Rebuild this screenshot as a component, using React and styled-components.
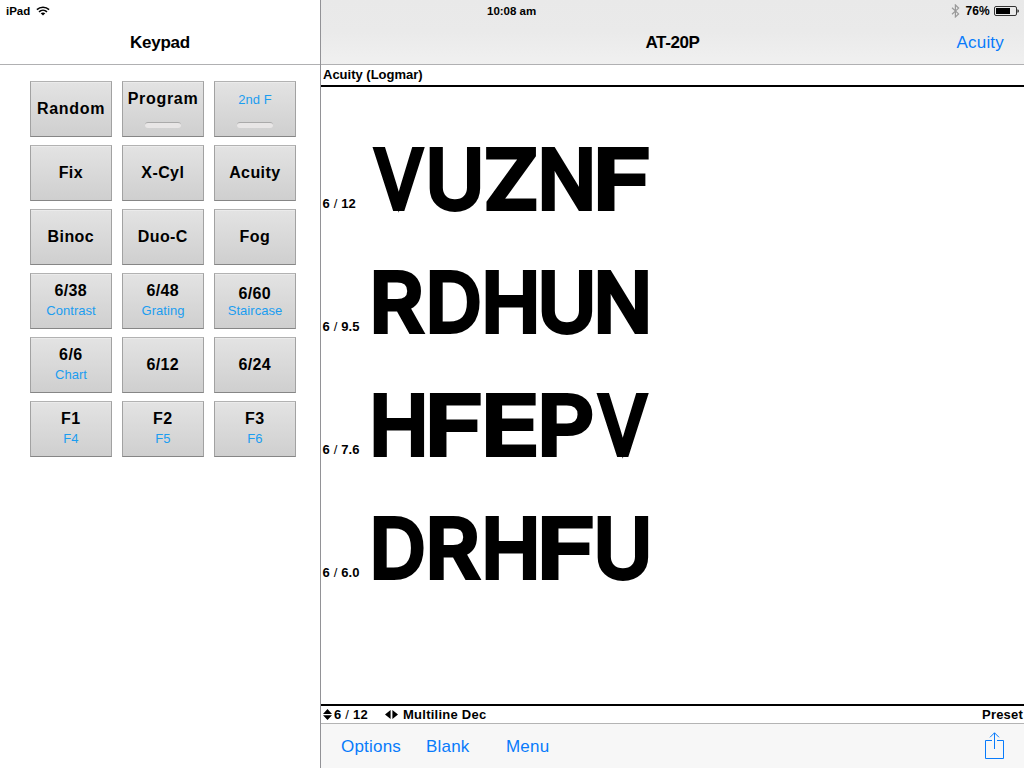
import React from 'react';
import styled, { createGlobalStyle } from 'styled-components';

const GlobalStyle = createGlobalStyle`
  * { box-sizing: border-box; }
  html, body { margin: 0; padding: 0; background: #fff; }
  body { font-family: "Liberation Sans", Arial, sans-serif; color: #000; overflow: hidden; }
`;

const Screen = styled.div`
  display: grid;
  grid-template-columns: 321px 703px;
  width: 1024px;
  height: 768px;
  overflow: hidden;
`;

const Sidebar = styled.aside`
  display: flex;
  flex-direction: column;
  border-right: 1px solid #929296;
  background: #fff;
`;

const Main = styled.main`
  display: flex;
  flex-direction: column;
  min-width: 0;
`;

const Header = styled.header`
  display: grid;
  grid-template-rows: 22px 42px;
  flex: none;
  height: 65px;
  border-bottom: 1px solid #b0b0b2;
  background: ${(p) => (p.$shaded ? 'linear-gradient(#e9e9e9 0%, #eaeaea 50%, #f0f0f0 100%)' : '#fff')};
`;

const StatusRow = styled.div`
  display: flex;
  align-items: center;
  padding: 0 5px 0 6px;
  font-size: 11.5px;
  font-weight: 700;
  line-height: 22px;
  white-space: nowrap;
`;

const Clock = styled.span`
  margin-left: 160px;
`;

const Power = styled.div`
  display: flex;
  align-items: center;
  margin-left: auto;
  font-size: 12px;
`;

const PowerLevel = styled.span`
  margin: 0 4px 0 5px;
  letter-spacing: 0.2px;
`;

const TitleRow = styled.div`
  display: grid;
  grid-template-columns: 1fr auto 1fr;
  align-items: center;
  padding: 0 20px 1px;
`;

const Title = styled.h1`
  grid-column: 2;
  margin: 0;
  font-size: 17px;
  font-weight: 700;
  line-height: 20px;
  letter-spacing: ${(p) => p.$spacing || '-0.25px'};
`;

const BarButton = styled.button`
  padding: 0;
  border: 0;
  background: none;
  color: #087bfb;
  font: 17px/20px "Liberation Sans", Arial, sans-serif;
  letter-spacing: 0.2px;
  justify-self: end;
`;

const Keys = styled.div`
  display: grid;
  grid-template-columns: repeat(3, 82px);
  grid-auto-rows: 56px;
  gap: 8px 10px;
  padding: 16px 0 0 30px;
`;

const KeyButton = styled.button`
  display: flex;
  flex-direction: column;
  align-items: center;
  justify-content: flex-start;
  padding: ${(p) => p.$top}px 0 0;
  border: 1px solid #a2a2a2;
  border-top-color: #b2b2b2;
  border-bottom-color: #868686;
  background: linear-gradient(#e3e3e3, #cfcfcf);
  box-shadow: inset 0 1px 0 #ebebeb;
  font-family: "Liberation Sans", Arial, sans-serif;
  white-space: nowrap;
`;

const KeyLabel = styled.span`
  color: #000;
  font-size: 16px;
  font-weight: 700;
  line-height: 18px;
  letter-spacing: ${(p) => (p.$wide ? 0.7 : 0.4)}px;
  margin-right: ${(p) => (p.$wide ? 0 : 0.4)}px;
`;

const KeyAlt = styled.span`
  color: #1b9df0;
  font-size: 13px;
  line-height: 16px;
  letter-spacing: 0.05px;
  margin-top: ${(p) => p.$gap || 0}px;
`;

const Lamp = styled.span`
  width: 36px;
  height: 6px;
  margin-top: ${(p) => p.$gap}px;
  border-radius: 3px;
  background: #e8e6e6;
  border-top: 1px solid #aaa;
`;

const Display = styled.section`
  display: flex;
  flex-direction: column;
  flex: 1;
  min-height: 0;
`;

const lcdType = `
  font-size: 13px;
  font-weight: 700;
  white-space: nowrap;
`;

const ChartName = styled.div`
  ${lcdType}
  height: 22px;
  padding-left: 2px;
  border-bottom: 2px solid #000;
  line-height: 20px;
`;

const Lines = styled.div`
  display: flex;
  flex-direction: column;
  flex: 1;
  gap: 59px;
  padding-top: 60px;
`;

const Line = styled.div`
  display: flex;
  align-items: flex-end;
  height: 64px;
`;

const LineSize = styled.span`
  ${lcdType}
  width: 52px;
  padding-left: 1.5px;
  line-height: 15px;
  letter-spacing: 0.15px;
`;

const Slash = styled.span`
  font-weight: 400;
`;

const Letters = styled.div`
  display: grid;
  grid-template-columns: repeat(5, 52px);
  column-gap: 4px;
  height: 64px;
`;

const FONT_SIZE = 79.8;
const STROKE = 6;
const PRECISION = 10;

const Glyph = styled.span`
  display: block;
  width: 52px;
  height: 64px;
  font-family: Inter, "Liberation Sans", sans-serif;
  font-size: ${FONT_SIZE}px;
  font-weight: 400;
  line-height: 64px;
  white-space: nowrap;
  -webkit-text-stroke: ${STROKE}px #000;
  transform-origin: 0 0;
  transform: scaleX(${(p) => p.$scale}) translateX(${(p) => p.$shift}px);
`;

const Footer = styled.div`
  ${lcdType}
  display: flex;
  align-items: center;
  height: 19px;
  padding: 0 1px 0 2px;
  border-top: 2px solid #000;
  line-height: 17px;
  letter-spacing: 0.25px;
`;

const Step = styled.span`
  display: flex;
  align-items: center;
  gap: ${(p) => p.$gap}px;
  width: ${(p) => p.$width}px;
`;

const Preset = styled.span`
  margin-left: auto;
  letter-spacing: 0.2px;
`;

const Toolbar = styled.nav`
  display: flex;
  align-items: center;
  flex: none;
  height: 45px;
  padding: 0 19px 0 20px;
  border-top: 1px solid #b4b4b4;
  background: #f7f7f7;
`;

const ToolSlot = styled.div`
  width: ${(p) => p.$width}px;
  padding-top: 2px;
  line-height: 20px;
`;

const ShareButton = styled.button`
  display: flex;
  margin-left: auto;
  padding: 0;
  border: 0;
  background: none;
  color: #087bfb;
`;

const pen = document.createElement('canvas').getContext('2d');
pen.font = `${FONT_SIZE * PRECISION}px Inter, "Liberation Sans"`;

// Every optotype fills the same box, whatever its natural width.
function fitLetter(letter) {
  const box = pen.measureText(letter);
  const left = -box.actualBoundingBoxLeft / PRECISION;
  const width = box.actualBoundingBoxRight / PRECISION - left + STROKE;
  const target = 'FEZP'.includes(letter) ? 52 : 51.2;
  return { scale: target / width, shift: STROKE / 2 - left };
}

function Optotype({ letter }) {
  const { scale, shift } = fitLetter(letter);
  return <Glyph $scale={scale} $shift={shift}>{letter}</Glyph>;
}

function Size({ value }) {
  return <>6 <Slash>/</Slash> {value}</>;
}

const WifiIcon = styled.svg`
  margin-left: 6px;
`;

function Wifi() {
  return (
    <WifiIcon width="14" height="10" viewBox="0 0 14 10" fill="none" stroke="#000" strokeWidth="1.5">
      <path d="M0.9 3.6C4.3 0.3 9.7 0.3 13.1 3.6" />
      <path d="M3 5.9C5.3 3.7 8.7 3.7 11 5.9" />
      <path d="M4.7 7.3C6 6.2 8 6.2 9.3 7.3L7 9.6Z" fill="#000" stroke="none" />
    </WifiIcon>
  );
}

function Bluetooth() {
  return (
    <svg width="9" height="14" viewBox="0 0 9 14" fill="none" stroke="#999" strokeWidth="1.2">
      <path d="M1 3.8L7.6 9.9L4.4 12.9V1L7.6 4.1L1 10.2" />
    </svg>
  );
}

function Battery() {
  return (
    <svg width="25" height="10" viewBox="0 0 25 10">
      <rect x="0.5" y="0.5" width="22" height="9" rx="1.5" fill="none" stroke="#333" />
      <rect x="2" y="2" width="14" height="6" fill="#000" />
      <path d="M23.5 3.2C25.2 3.5 25.2 6.5 23.5 6.8Z" fill="#000" />
    </svg>
  );
}

const keys = [
  { label: 'Random', top: 18, wide: true },
  { label: 'Program', top: 8, lamp: 14, wide: true },
  { alt: '2nd F', top: 10, lamp: 14 },
  { label: 'Fix', top: 18 },
  { label: 'X-Cyl', top: 18 },
  { label: 'Acuity', top: 18 },
  { label: 'Binoc', top: 18 },
  { label: 'Duo-C', top: 18 },
  { label: 'Fog', top: 18 },
  { label: '6/38', alt: 'Contrast', top: 8, gap: 3 },
  { label: '6/48', alt: 'Grating', top: 8, gap: 3 },
  { label: '6/60', alt: 'Staircase', top: 11, gap: 0 },
  { label: '6/6', alt: 'Chart', top: 8, gap: 3 },
  { label: '6/12', top: 18 },
  { label: '6/24', top: 18 },
  { label: 'F1', alt: 'F4', top: 8, gap: 3 },
  { label: 'F2', alt: 'F5', top: 8, gap: 3 },
  { label: 'F3', alt: 'F6', top: 8, gap: 3 },
];

const lines = [
  { size: '12', letters: 'VUZNF' },
  { size: '9.5', letters: 'RDHUN' },
  { size: '7.6', letters: 'HFEPV' },
  { size: '6.0', letters: 'DRHFU' },
];

export default function App() {
  return (
    <>
      <GlobalStyle />
      <Screen>
        <Sidebar>
          <Header>
            <StatusRow>iPad<Wifi /></StatusRow>
            <TitleRow><Title>Keypad</Title></TitleRow>
          </Header>
          <Keys>
            {keys.map((k) => (
              <KeyButton key={k.label || k.alt} $top={k.top}>
                {k.label && <KeyLabel $wide={k.wide}>{k.label}</KeyLabel>}
                {k.alt && <KeyAlt $gap={k.gap}>{k.alt}</KeyAlt>}
                {k.lamp && <Lamp $gap={k.lamp} />}
              </KeyButton>
            ))}
          </Keys>
        </Sidebar>
        <Main>
          <Header $shaded>
            <StatusRow>
              <Clock>10:08 am</Clock>
              <Power>
                <Bluetooth />
                <PowerLevel>76%</PowerLevel>
                <Battery />
              </Power>
            </StatusRow>
            <TitleRow>
              <Title $spacing="-0.4px">AT-20P</Title>
              <BarButton>Acuity</BarButton>
            </TitleRow>
          </Header>
          <Display>
            <ChartName>Acuity (Logmar)</ChartName>
            <Lines>
              {lines.map((line) => (
                <Line key={line.size}>
                  <LineSize><Size value={line.size} /></LineSize>
                  <Letters>
                    {[...line.letters].map((l) => <Optotype key={l} letter={l} />)}
                  </Letters>
                </Line>
              ))}
            </Lines>
            <Footer>
              <Step $gap={2} $width={62}>
                <svg width="9" height="11" viewBox="0 0 9 11"><path d="M0 5L4.5 0L9 5ZM0 6.2H9L4.5 11Z" /></svg>
                <span><Size value="12" /></span>
              </Step>
              <Step $gap={5} $width={110}>
                <svg width="13" height="9" viewBox="0 0 13 9"><path d="M5.6 0V9L0 4.5ZM7.4 0L13 4.5L7.4 9Z" /></svg>
                <span>Multiline Dec</span>
              </Step>
              <Preset>Preset</Preset>
            </Footer>
          </Display>
          <Toolbar>
            <ToolSlot $width={85}><BarButton>Options</BarButton></ToolSlot>
            <ToolSlot $width={80}><BarButton>Blank</BarButton></ToolSlot>
            <ToolSlot $width={80}><BarButton>Menu</BarButton></ToolSlot>
            <ShareButton aria-label="Share">
              <svg width="20" height="28" viewBox="0 0 20 28" fill="none" stroke="currentColor">
                <path d="M7 8.5H0.5V26.5H18.5V8.5H12" />
                <path d="M9.5 17V0.8M5 5.3L9.5 0.8L14 5.3" />
              </svg>
            </ShareButton>
          </Toolbar>
        </Main>
      </Screen>
    </>
  );
}
